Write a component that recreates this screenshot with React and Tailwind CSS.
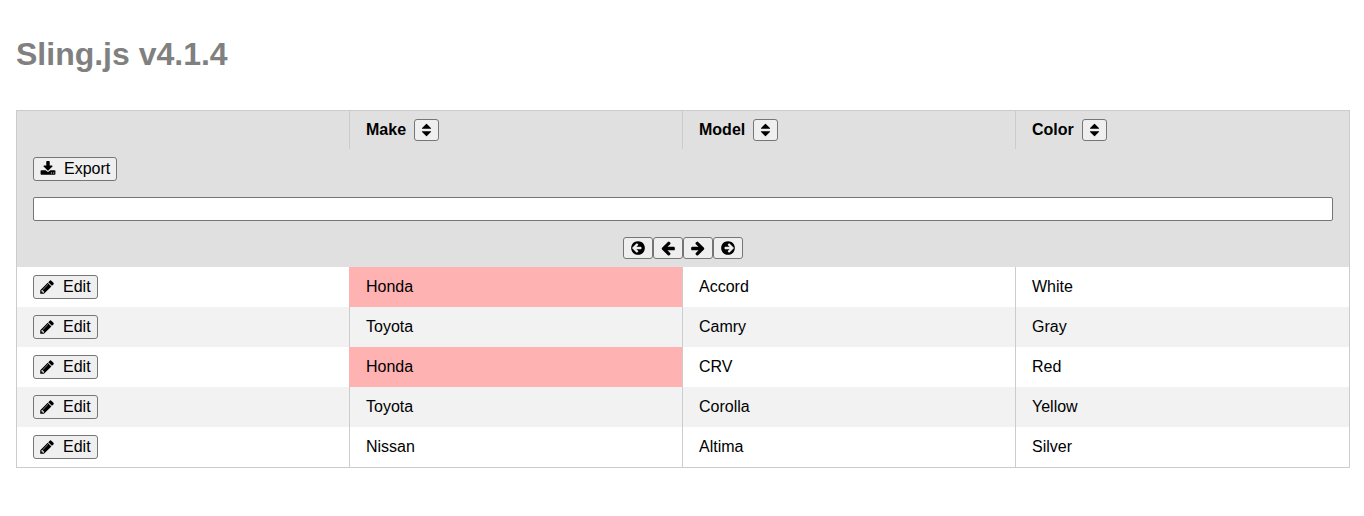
const columns = ["Make", "Model", "Color"];
const rows = [
  ["Honda", "Accord", "White"],
  ["Toyota", "Camry", "Gray"],
  ["Honda", "CRV", "Red"],
  ["Toyota", "Corolla", "Yellow"],
  ["Nissan", "Altima", "Silver"],
];

const paths = {
  sort: "M1408 1088q0 26-19 45l-448 448q-19 19-45 19t-45-19l-448-448q-19-19-19-45t19-45 45-19h896q26 0 45 19t19 45zm0-384q0 26-19 45t-45 19h-896q-26 0-45-19t-19-45 19-45l448-448q19-19 45-19t45 19l448 448q19 19 19 45z",
  download:
    "M1344 1344q0-26-19-45t-45-19-45 19-19 45 19 45 45 19 45-19 19-45zm256 0q0-26-19-45t-45-19-45 19-19 45 19 45 45 19 45-19 19-45zm128-224v320q0 40-28 68t-68 28h-1472q-40 0-68-28t-28-68v-320q0-40 28-68t68-28h465l135 136q58 56 136 56t136-56l136-136h464q40 0 68 28t28 68zm-325-569q17 41-14 70l-448 448q-18 19-45 19t-45-19l-448-448q-31-29-14-70 17-39 59-39h256v-448q0-26 19-45t45-19h256q26 0 45 19t19 45v448h256q42 0 59 39z",
  pencil:
    "M491 1536l91-91-235-235-91 91v107h128v128h107zm523-928q0-22-22-22-10 0-17 7l-542 542q-7 7-7 17 0 22 22 22 10 0 17-7l542-542q7-7 7-17zm-54-192l416 416-832 832h-416v-416zm683 96q0 53-37 90l-166 166-416-416 166-165q36-38 90-38 53 0 91 38l235 234q37 39 37 91z",
  circle:
    "M1280 960v-128q0-26-19-45t-45-19h-502l189-189q19-19 19-45t-19-45l-91-91q-18-18-45-18t-45 18l-362 362-91 91q-18 18-18 45t18 45l91 91 362 362q18 18 45 18t45-18l91-91q18-18 18-45t-18-45l-189-189h502q26 0 45-19t19-45zm384-64q0 209-103 385.5t-279.5 279.5-385.5 103-385.5-103-279.5-279.5-103-385.5 103-385.5 279.5-279.5 385.5-103 385.5 103 279.5 279.5 103 385.5z",
  arrow:
    "M1664 896v128q0 53-32.5 90.5t-84.5 37.5h-704l293 294q38 36 38 90t-38 90l-75 76q-37 37-90 37-52 0-91-37l-651-652q-37-37-37-90 0-52 37-91l651-650q38-38 91-38 52 0 90 38l75 74q38 38 38 91t-38 91l-293 293h704q52 0 84.5 37.5t32.5 90.5z",
};

function Icon({ name, viewBox = "0 0 1792 1792", className = "size-4" }) {
  return (
    <svg viewBox={viewBox} fill="currentColor" className={className} aria-hidden="true">
      <path d={paths[name]} />
    </svg>
  );
}

const pager = [
  ["First page", "circle", "size-4"],
  ["Previous page", "arrow", "size-4"],
  ["Next page", "arrow", "size-4 -scale-x-100"],
  ["Last page", "circle", "size-4 -scale-x-100"],
];
const button = "flex items-center rounded-[3px] border border-[#767676] bg-[#efefef] px-[6px]";

export default function App() {
  return (
    <main className="py-4 pr-[14px] pl-4 font-['Liberation_Sans',Arial,sans-serif] text-base text-black">
      <h1 className="mt-4 mb-[34px] text-[32px] leading-11 font-bold text-[#808080]">Sling.js v4.1.4</h1>
      <table className="w-full table-fixed border-separate border-spacing-0 border border-[#cccccc]">
        <thead className="bg-[#e0e0e0] text-left">
          <tr>
            <td className="border-r border-[#cccccc]" />
            {columns.map((c) => (
              <th key={c} scope="col" className="h-[38px] border-r border-[#cccccc] px-4 py-0 last:border-r-0">
                <span className="flex items-center gap-2">
                  {c}
                  <button type="button" aria-label={"Sort by " + c} className={button + " h-[22px]"}>
                    <Icon name="sort" viewBox="280 0 1232 1792" className="h-4 w-[11px]" />
                  </button>
                </span>
              </th>
            ))}
          </tr>
          <tr>
            <td colSpan={4} className="h-10 px-4 py-0">
              <button type="button" className={button + " h-6 gap-2"}>
                <Icon name="download" />
                Export
              </button>
            </td>
          </tr>
          <tr>
            <td colSpan={4} className="h-10 px-4 py-0">
              <input type="text" aria-label="Search" className="block h-6 w-full rounded-[2px] border border-[#767676] bg-white px-1" />
            </td>
          </tr>
          <tr>
            <td colSpan={4} className="h-[38px] p-0">
              <div className="flex justify-center">
                {pager.map(([label, name, cls]) => (
                  <button key={label} type="button" aria-label={label} className={button + " h-[22px]"}>
                    <Icon name={name} className={cls} />
                  </button>
                ))}
              </div>
            </td>
          </tr>
        </thead>
        <tbody>
          {rows.map((row, i) => (
            <tr key={i} className="even:bg-[#f2f2f2]">
              <td className={"h-10 border-r px-4 py-0 " + (row[0] === "Honda" ? "border-[#ffb2b2]" : "border-[#cccccc]")}>
                <button type="button" className={button + " h-6 gap-2"}>
                  <Icon name="pencil" viewBox="100 0 1680 1792" className="h-4 w-[15px]" />
                  Edit
                </button>
              </td>
              {row.map((v) => (
                <td key={v} className={"border-r border-[#cccccc] px-4 py-0 last:border-r-0 " + (v === "Honda" ? "bg-[#ffb2b2]" : "")}>
                  {v}
                </td>
              ))}
            </tr>
          ))}
        </tbody>
      </table>
    </main>
  );
}
